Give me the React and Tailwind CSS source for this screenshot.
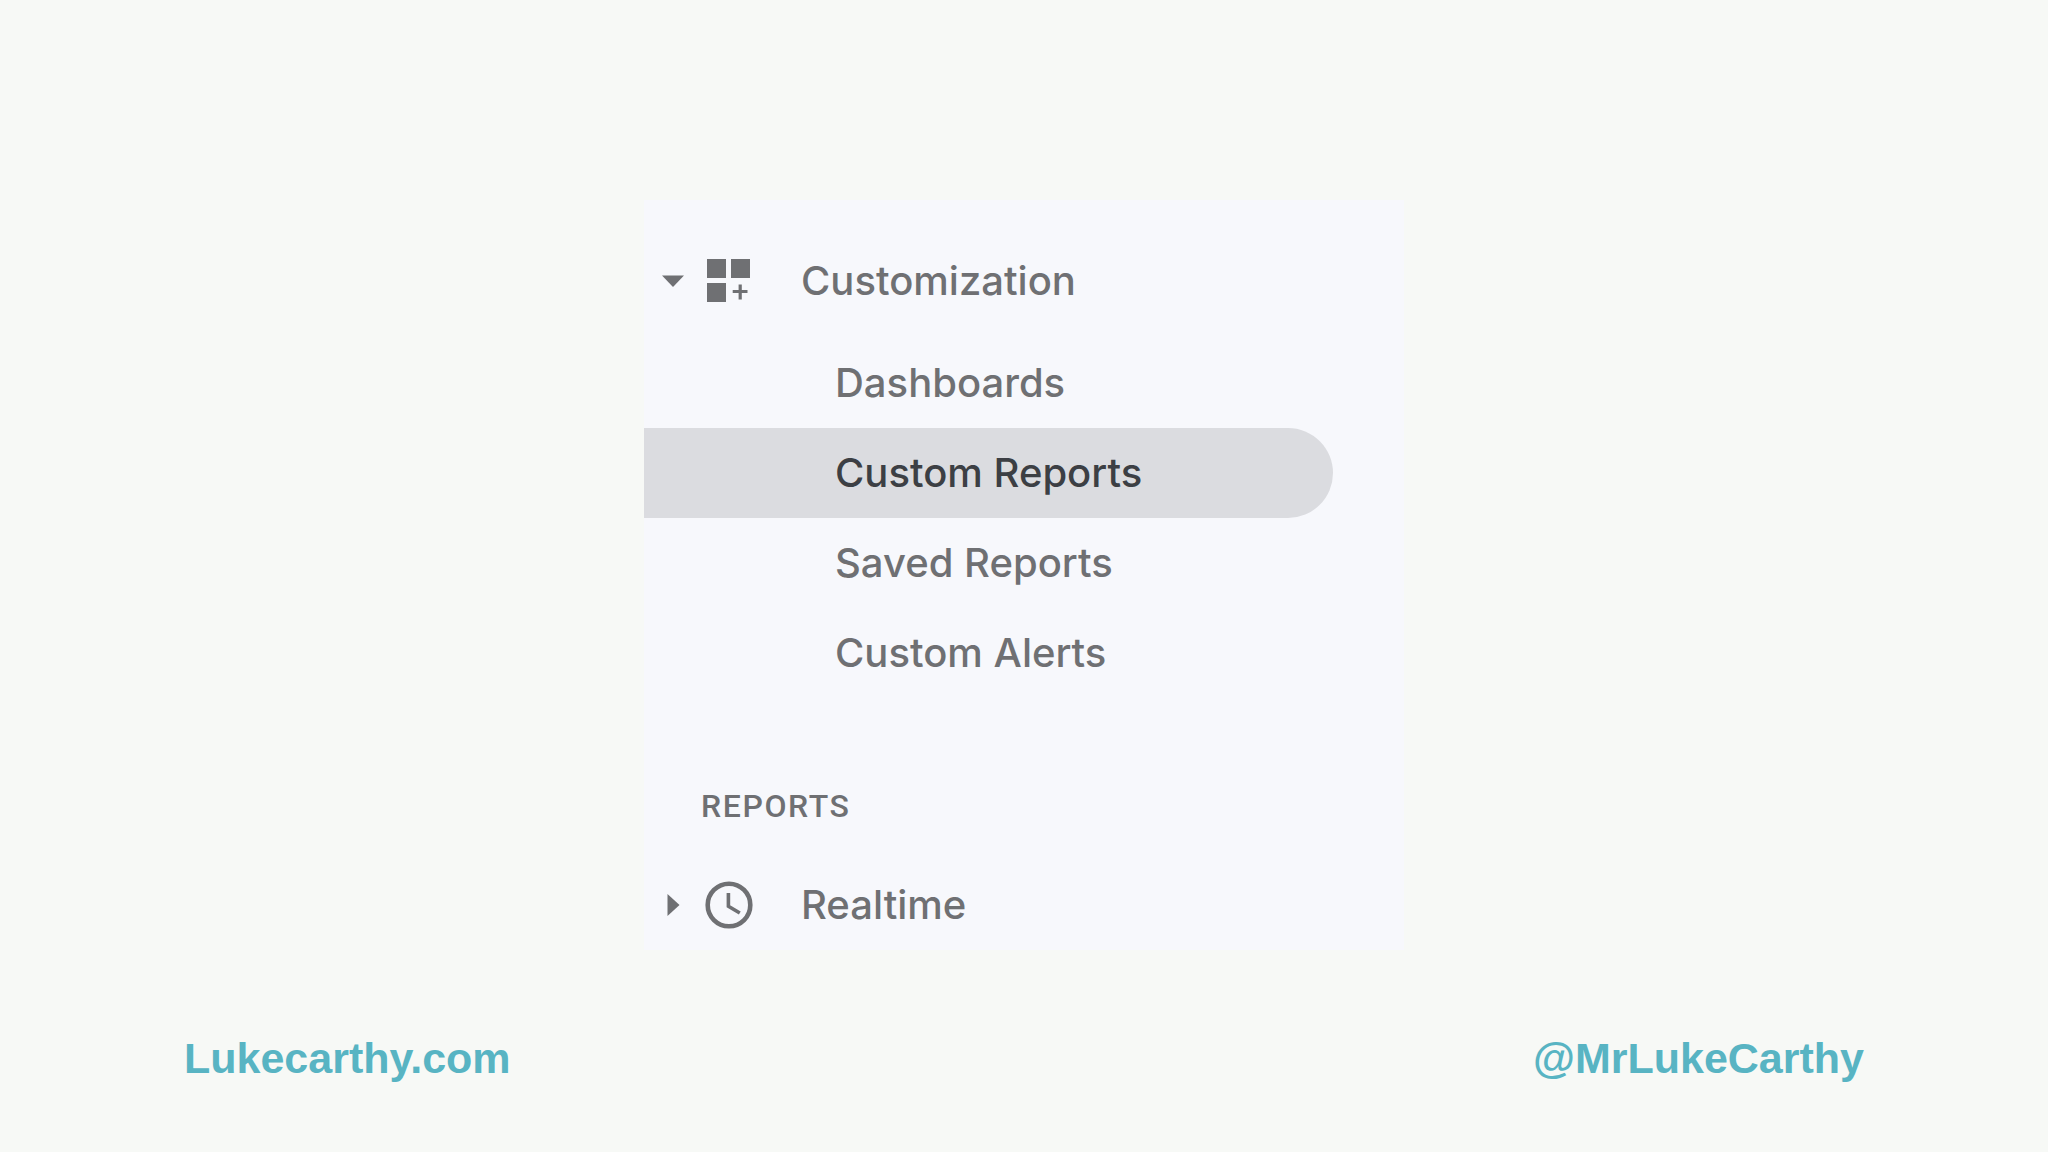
const reports = [
  { label: 'Dashboards' },
  { label: 'Custom Reports', active: true },
  { label: 'Saved Reports' },
  { label: 'Custom Alerts' },
];

const CustomizationIcon = () => (
  <svg viewBox="0 0 48 48" className="size-12 shrink-0" fill="currentColor" aria-hidden="true">
    <rect x="2" y="2" width="19" height="19" />
    <rect x="26" y="2" width="19" height="19" />
    <rect x="2" y="26" width="19" height="19" />
    <path d="M33.6 27.5h3.2v5.5h5.7v3h-5.7v6.5h-3.2V36h-5.9v-3h5.9z" />
  </svg>
);

const ClockIcon = () => (
  <svg viewBox="0 0 48 48" className="size-12 shrink-0" fill="none" stroke="currentColor" aria-hidden="true">
    <circle cx="24" cy="24" r="21.3" strokeWidth="4.6" />
    <path d="M23.4 12v13.2l11.4 6.8" strokeWidth="3.6" />
  </svg>
);

const Arrow = ({ open }) => (
  <svg viewBox="0 0 24 24" className="size-6 shrink-0" fill="currentColor" aria-hidden="true">
    {open ? <path d="M1 6.5h22L12 18z" /> : <path d="M6.5 1v22L18.5 12z" />}
  </svg>
);

const SectionButton = ({ label, icon, open = false }) => (
  <button
    type="button"
    aria-expanded={open}
    className="flex h-[90px] w-full items-center pl-[17px] text-left"
  >
    <Arrow open={open} />
    <span className="ml-5 mr-12">{icon}</span>
    {label}
  </button>
);

const NavLink = ({ label, active }) => (
  <a
    href="#"
    aria-current={active ? 'page' : undefined}
    className={`mr-[71px] flex h-[90px] items-center rounded-r-full pl-[191px] ${
      active ? 'bg-[#dbdce0] text-[#3c3f44]' : ''
    }`}
  >
    {label}
  </a>
);

const App = () => {
  return (
    <div className="flex min-h-screen flex-col bg-[#f7f9f6] font-['Liberation_Sans',sans-serif]">
      <nav className="mx-auto mt-[200px] w-full max-w-[760px] bg-[#f7f8fc] pt-9 font-['Inter',sans-serif] text-[40px] font-medium text-[#6f7073]">
        <SectionButton label="Customization" icon={<CustomizationIcon />} open />
        <ul className="mt-3">
          {reports.map((item) => (
            <li key={item.label}>
              <NavLink {...item} />
            </li>
          ))}
        </ul>

        <h2 className="mt-[92px] pl-[57px] font-['Roboto',sans-serif] text-[32px] leading-8 font-medium tracking-wider">
          REPORTS
        </h2>
        <div className="mt-[38px]">
          <SectionButton label="Realtime" icon={<ClockIcon />} />
        </div>
      </nav>

      <footer className="mt-auto flex justify-between px-[184px] pb-[68px] text-[43px] leading-[52px] font-bold text-[#58b4c3]">
        <a href="#">Lukecarthy.com</a>
        <a href="#">@MrLukeCarthy</a>
      </footer>
    </div>
  );
};

export default App;
